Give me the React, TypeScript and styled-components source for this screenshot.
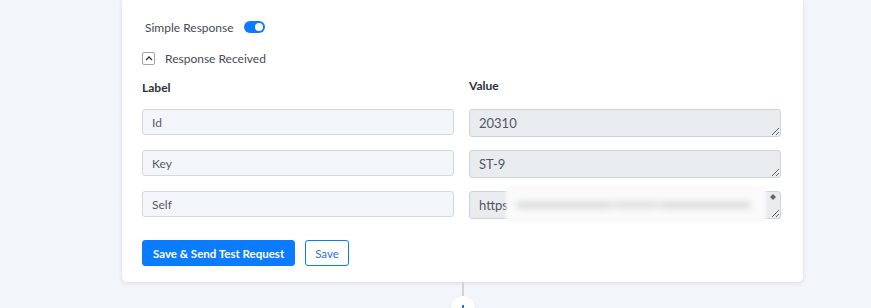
import React from "react";
import styled, { createGlobalStyle } from "styled-components";

const Global = createGlobalStyle`
  html, body { margin: 0; padding: 0; background: #f2f5f9; }
  body { font-family: Lato, "Open Sans", sans-serif; color: #3d4450; overflow: hidden; }
`;

const Page = styled.div`
  width: 681px;
  margin-left: 122px;
  display: flex;
  flex-direction: column;
  align-items: center;
`;

const Card = styled.div`
  align-self: stretch;
  background: #fff;
  border-radius: 0 0 5px 5px;
  box-shadow: 0 1px 4px rgba(30, 40, 60, 0.12);
  padding: 19px 22px 16px 20px;
  display: flex;
  flex-direction: column;
`;

const ToggleRow = styled.div`
  display: flex;
  align-items: center;
  gap: 10px;
  height: 16px;
  padding-left: 3px;
  font-size: 12px;
  color: #444b55;
`;

const Switch = styled.span`
  width: 21px;
  height: 12px;
  border-radius: 6px;
  background: #0b7bff;
  position: relative;
  display: inline-block;
  &::after {
    content: "";
    position: absolute;
    right: 2px;
    top: 2px;
    width: 8px;
    height: 8px;
    border-radius: 50%;
    background: #fff;
  }
`;

const CollapseRow = styled.div`
  margin-top: 16px;
  display: flex;
  align-items: center;
  gap: 10px;
  height: 14px;
  font-size: 12px;
  color: #444b55;
`;

const CollapseBtn = styled.span`
  width: 11px;
  height: 11px;
  border: 1px solid #9ca3ad;
  border-radius: 2px;
  display: inline-flex;
  align-items: center;
  justify-content: center;
`;

const Grid = styled.div`
  margin-top: 15px;
  display: grid;
  grid-template-columns: 312px 312px;
  column-gap: 15px;
  row-gap: 13px;
  align-items: start;
`;

const Header = styled.div<{ $shift?: number }>`
  font-size: 12px;
  font-weight: 700;
  color: #2c323a;
  line-height: 16px;
  transform: translateY(${(p) => p.$shift ?? 0}px);
`;

const LabelInput = styled.input`
  box-sizing: border-box;
  width: 312px;
  height: 26px;
  background: #f3f6f9;
  border: 1px solid #d3d8de;
  border-radius: 3px;
  padding: 0 9px;
  font-family: Lato, "Open Sans", sans-serif;
  font-size: 12px;
  color: #555c66;
  outline: none;
`;

const ValueWrap = styled.div`
  position: relative;
  width: 312px;
  height: 28px;
`;

const ValueArea = styled.textarea`
  box-sizing: border-box;
  display: block;
  width: 312px;
  height: 28px;
  background: #e9ecef;
  border: 1px solid #cfd4da;
  border-radius: 3px;
  padding: 5px 9px;
  font-family: Lato, "Open Sans", sans-serif;
  font-size: 13px;
  line-height: 16px;
  color: #50565f;
  resize: vertical;
  overflow: hidden;
  outline: none;
`;

const ScrollArrow = styled.span`
  position: absolute;
  right: 5px;
  top: 3px;
  width: 0;
  height: 0;
  border-left: 3px solid transparent;
  border-right: 3px solid transparent;
  border-bottom: 3px solid #666;
  &::after {
    content: "";
    position: absolute;
    left: -3px;
    top: 3px;
    border-left: 3px solid transparent;
    border-right: 3px solid transparent;
    border-top: 3px solid #666;
  }
`;

const Blur = styled.div`
  position: absolute;
  left: 37px;
  top: -5px;
  width: 260px;
  height: 37px;
  background: rgba(250, 250, 251, 0.97);
  display: flex;
  align-items: center;
  padding-left: 10px;
  box-sizing: border-box;
  filter: blur(1.5px);
`;

const BlurText = styled.div`
  height: 6px;
  width: 235px;
  border-radius: 4px;
  background: linear-gradient(90deg, #d2d5d9 0 40%, #e6e8ea 40% 42%, #d6d8dc 42% 60%, #e6e8ea 60% 62%, #d2d5d9 62% 100%);
  filter: blur(3px);
`;

const Buttons = styled.div`
  margin-top: 21px;
  display: flex;
  gap: 10px;
`;

const Button = styled.button<{ $primary?: boolean }>`
  box-sizing: border-box;
  height: 26px;
  padding: 0 ${(p) => (p.$primary ? 10 : 9)}px;
  border-radius: 3px;
  font-family: Lato, "Open Sans", sans-serif;
  font-size: 11.5px;
  font-weight: ${(p) => (p.$primary ? 700 : 400)};
  border: 1px solid #0b7bff;
  background: ${(p) => (p.$primary ? "#0b7bff" : "#fff")};
  color: ${(p) => (p.$primary ? "#fff" : "#2f6fe0")};
  cursor: pointer;
`;

const Line = styled.div`
  width: 2px;
  height: 14px;
  background: #cfd4da;
`;

const Plus = styled.div`
  width: 24px;
  height: 24px;
  border-radius: 50%;
  background: #fff;
  box-shadow: 0 1px 3px rgba(30, 40, 60, 0.1);
  display: flex;
  justify-content: center;
  padding-top: 9px;
  box-sizing: border-box;
  &::before {
    content: "";
    width: 2px;
    height: 8px;
    background: #2f6fe0;
  }
`;

const rows = [
  { label: "Id", value: "20310" },
  { label: "Key", value: "ST-9" },
  { label: "Self", value: "https", blurred: true },
];

export default function App() {
  return (
    <>
      <Global />
      <Page>
        <Card>
          <ToggleRow>
            Simple Response <Switch />
          </ToggleRow>
          <CollapseRow>
            <CollapseBtn>
              <svg width="8" height="5" viewBox="0 0 8 5">
                <path d="M1 4 L4 1 L7 4" fill="none" stroke="#333" strokeWidth="1.3" />
              </svg>
            </CollapseBtn>
            Response Received
          </CollapseRow>
          <Grid>
            <Header $shift={0}>Label</Header>
            <Header $shift={-2}>Value</Header>
            {rows.map((r) => (
              <React.Fragment key={r.label}>
                <LabelInput readOnly value={r.label} />
                <ValueWrap>
                  <ValueArea readOnly value={r.value} />
                  {r.blurred && (
                    <>
                      <ScrollArrow />
                      <Blur>
                        <BlurText />
                      </Blur>
                    </>
                  )}
                </ValueWrap>
              </React.Fragment>
            ))}
          </Grid>
          <Buttons>
            <Button $primary>Save &amp; Send Test Request</Button>
            <Button>Save</Button>
          </Buttons>
        </Card>
        <Line />
        <Plus />
      </Page>
    </>
  );
}
